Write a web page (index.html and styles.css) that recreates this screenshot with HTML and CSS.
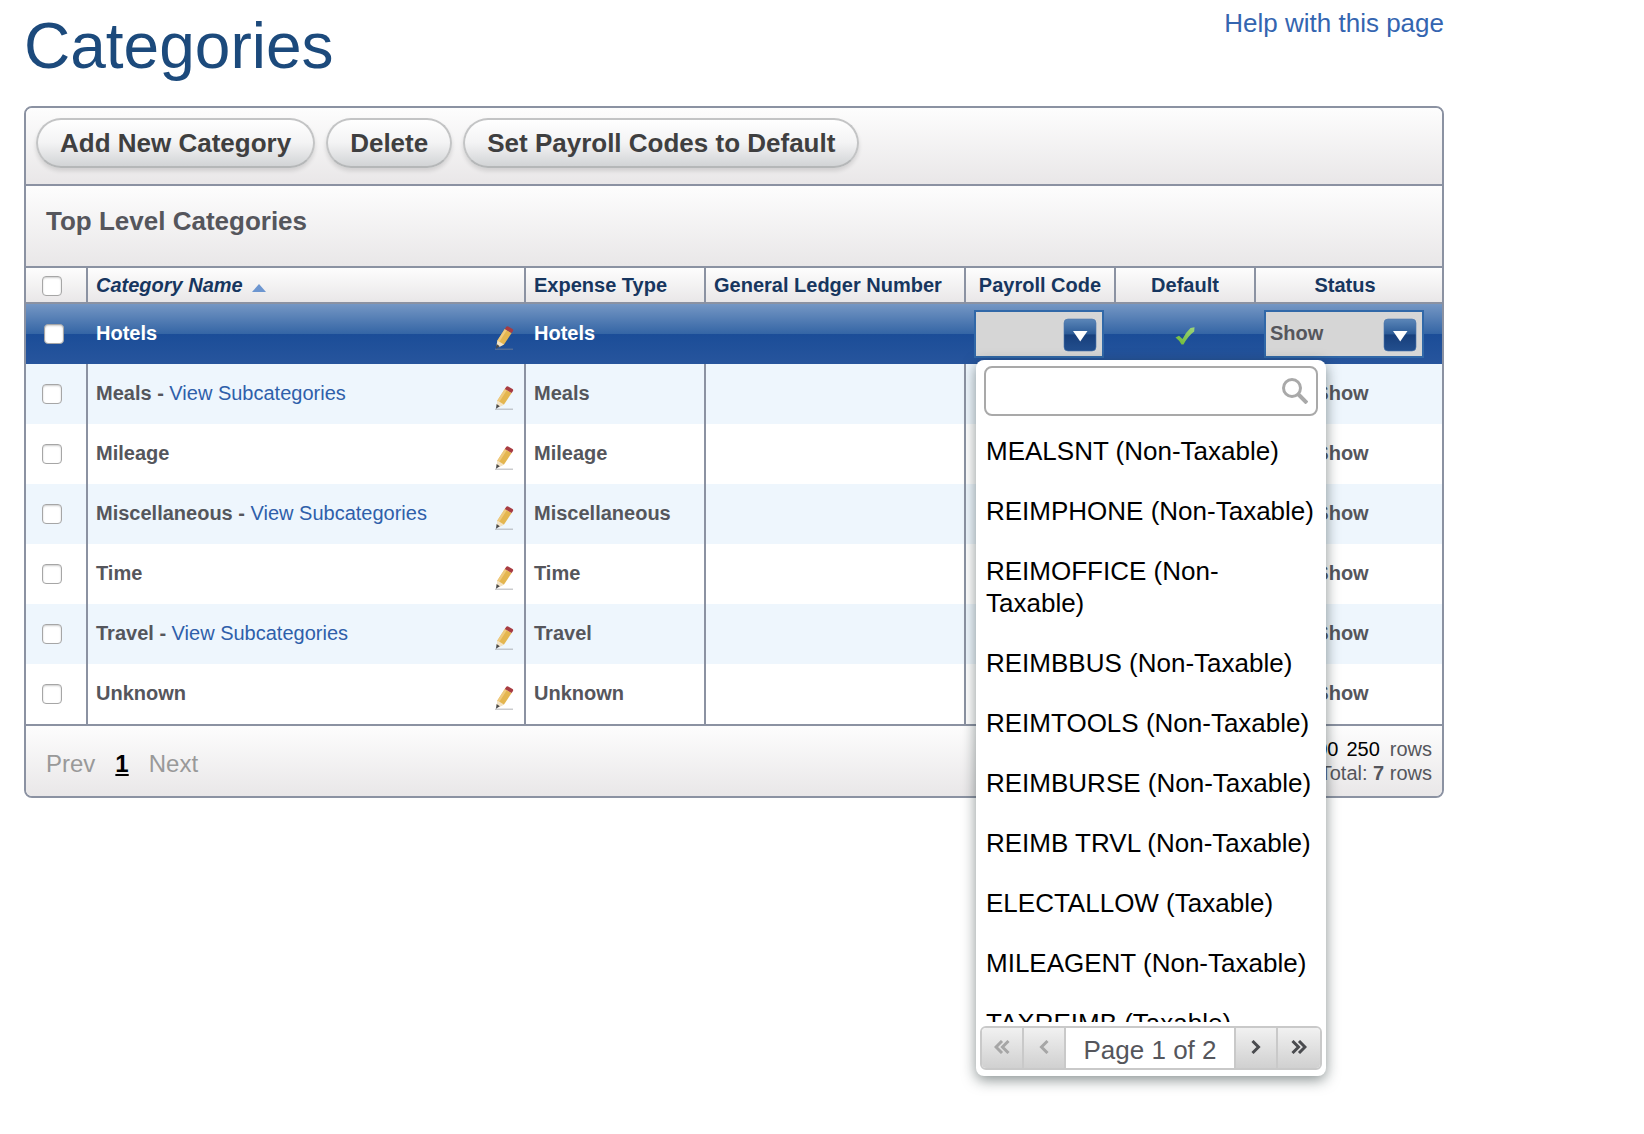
FILE: index.html
```html
<!DOCTYPE html>
<html lang="en">
<head>
<meta charset="utf-8">
<meta name="viewport" content="width=device-width, initial-scale=1">
<title>Categories</title>
<link rel="stylesheet" href="styles.css">
</head>
<body>
<svg class="sprite" aria-hidden="true">
  <defs>
    <linearGradient id="arrow-fill" x1="0" y1="0" x2="0" y2="1">
      <stop offset="0" stop-color="#5b86b8"/>
      <stop offset=".46" stop-color="#2d5c98"/>
      <stop offset=".5" stop-color="#173f7c"/>
      <stop offset="1" stop-color="#234f8e"/>
    </linearGradient>
    <linearGradient id="check-fill" x1="0" y1="1" x2="1" y2="0">
      <stop offset="0" stop-color="#6cb832"/>
      <stop offset="1" stop-color="#9ed67c"/>
    </linearGradient>
  </defs>
  <symbol id="pencil" viewBox="0 0 20 24">
    <path d="M1 22.500h18v1.500H1Z" fill="#8c8f94" opacity=".45"/>
    <path d="M3.400 14.500 10.800 3 17.600 7 10 18.600 4.500 20.800Z" fill="#e4b650"/>
    <path d="M3.400 14.500 10.800 3 12.800 4.200 5.400 15.800Z" fill="#efca7e"/>
    <path d="M3.400 14.500 10 18.600 5 21.200 2.500 19.500Z" fill="#f3e3c4"/>
    <path d="M2.600 18 5.800 20.300 2 22.800Z" fill="#4a4a4a"/>
    <path d="M10.800 3 12.300.8Q13 0 14.200.4L18.600 3Q19.500 3.800 19 4.900L17.600 7Z" fill="#a83c42"/>
  </symbol>
  <symbol id="arrow" viewBox="0 0 34 34">
    <rect x="1" y="1" width="32" height="32" rx="4" fill="url(#arrow-fill)" stroke="#4a76ad" stroke-opacity=".6"/>
    <path d="M10 13h14.500L17.200 23.500Z" fill="#fff"/>
  </symbol>
</svg>

<main class="page">
  <header class="page-head">
    <h1 class="page-title">Categories</h1>
    <a class="help-link" href="#help">Help with this page</a>
  </header>

  <section class="panel">
    <div class="toolbar">
      <button class="pill" type="button">Add New Category</button>
      <button class="pill" type="button">Delete</button>
      <button class="pill" type="button">Set Payroll Codes to Default</button>
    </div>
    <h2 class="panel-title">Top Level Categories</h2>

    <table class="grid">
      <colgroup>
        <col class="col-check"><col><col class="col-type"><col class="col-ledger">
        <col class="col-payroll"><col class="col-default"><col class="col-status">
      </colgroup>
      <thead>
        <tr>
          <th class="check-cell"><input class="tick" type="checkbox" aria-label="Select all categories"></th>
          <th class="sorted">Category Name<span class="sort-up"></span></th>
          <th>Expense Type</th>
          <th>General Ledger Number</th>
          <th class="center">Payroll Code</th>
          <th class="center">Default</th>
          <th class="status-cell">Status</th>
        </tr>
      </thead>
      <tbody>
        <tr class="active">
          <td class="check-cell"><input class="tick" type="checkbox" aria-label="Select Hotels"></td>
          <td><div class="name"><span>Hotels</span><button class="edit" type="button" aria-label="Edit Hotels"><svg><use href="#pencil"/></svg></button></div></td>
          <td>Hotels</td>
          <td></td>
          <td class="select-cell">
            <div class="picker">
              <select class="drop" aria-label="Payroll code"><option></option></select>
              <svg class="drop-arrow" aria-hidden="true"><use href="#arrow"/></svg>
              <div class="popup">
                <div class="search">
                  <input class="search-box" type="text" aria-label="Search payroll codes">
                  <svg class="search-icon" viewBox="0 0 26 26" aria-hidden="true"><circle cx="10" cy="10" r="8.500" fill="none" stroke="#a9a9a9" stroke-width="3"/><path d="M16 16 25 25" stroke="#a9a9a9" stroke-width="4"/></svg>
                </div>
                <ul class="options">
                  <li>MEALSNT (Non-Taxable)</li>
                  <li>REIMPHONE (Non-Taxable)</li>
                  <li>REIMOFFICE (Non-Taxable)</li>
                  <li>REIMBBUS (Non-Taxable)</li>
                  <li>REIMTOOLS (Non-Taxable)</li>
                  <li>REIMBURSE (Non-Taxable)</li>
                  <li>REIMB TRVL (Non-Taxable)</li>
                  <li>ELECTALLOW (Taxable)</li>
                  <li>MILEAGENT (Non-Taxable)</li>
                  <li>TAXREIMB (Taxable)</li>
                </ul>
                <div class="pager">
                  <button class="pager-btn off" type="button" aria-label="First page"><svg viewBox="0 0 16 14"><path d="M8 1 2 7l6 6M14.500 1l-6 6 6 6"/></svg></button>
                  <button class="pager-btn off" type="button" aria-label="Previous page"><svg viewBox="0 0 16 14"><path d="M11.500 1l-6 6 6 6"/></svg></button>
                  <span class="pager-text">Page 1 of 2</span>
                  <button class="pager-btn" type="button" aria-label="Next page"><svg viewBox="0 0 16 14"><path d="M4.500 1l6 6-6 6"/></svg></button>
                  <button class="pager-btn" type="button" aria-label="Last page"><svg viewBox="0 0 16 14"><path d="M1.500 1l6 6-6 6M8 1l6 6-6 6"/></svg></button>
                </div>
              </div>
            </div>
          </td>
          <td class="center"><svg class="check" viewBox="0 0 20 18" role="img" aria-label="Yes"><path d="M.5 10.500 4 8.800 7.500 12Q11 5 15.500 1L19.500 .3 19.200 4.500Q13 9 8.500 17.500L6.500 17.500Q4 13 .5 10.500Z" fill="url(#check-fill)"/></svg></td>
          <td class="select-cell">
            <div class="picker">
              <select class="drop" aria-label="Status"><option>Show</option><option>Hide</option></select>
              <svg class="drop-arrow" aria-hidden="true"><use href="#arrow"/></svg>
            </div>
          </td>
        </tr>
        <tr>
          <td class="check-cell"><input class="tick" type="checkbox" aria-label="Select Meals"></td>
          <td><div class="name"><span>Meals - <a href="#meals">View Subcategories</a></span><button class="edit" type="button" aria-label="Edit Meals"><svg><use href="#pencil"/></svg></button></div></td>
          <td>Meals</td><td></td><td></td><td></td><td class="status-cell">Show</td>
        </tr>
        <tr>
          <td class="check-cell"><input class="tick" type="checkbox" aria-label="Select Mileage"></td>
          <td><div class="name"><span>Mileage</span><button class="edit" type="button" aria-label="Edit Mileage"><svg><use href="#pencil"/></svg></button></div></td>
          <td>Mileage</td><td></td><td></td><td></td><td class="status-cell">Show</td>
        </tr>
        <tr>
          <td class="check-cell"><input class="tick" type="checkbox" aria-label="Select Miscellaneous"></td>
          <td><div class="name"><span>Miscellaneous - <a href="#miscellaneous">View Subcategories</a></span><button class="edit" type="button" aria-label="Edit Miscellaneous"><svg><use href="#pencil"/></svg></button></div></td>
          <td>Miscellaneous</td><td></td><td></td><td></td><td class="status-cell">Show</td>
        </tr>
        <tr>
          <td class="check-cell"><input class="tick" type="checkbox" aria-label="Select Time"></td>
          <td><div class="name"><span>Time</span><button class="edit" type="button" aria-label="Edit Time"><svg><use href="#pencil"/></svg></button></div></td>
          <td>Time</td><td></td><td></td><td></td><td class="status-cell">Show</td>
        </tr>
        <tr>
          <td class="check-cell"><input class="tick" type="checkbox" aria-label="Select Travel"></td>
          <td><div class="name"><span>Travel - <a href="#travel">View Subcategories</a></span><button class="edit" type="button" aria-label="Edit Travel"><svg><use href="#pencil"/></svg></button></div></td>
          <td>Travel</td><td></td><td></td><td></td><td class="status-cell">Show</td>
        </tr>
        <tr>
          <td class="check-cell"><input class="tick" type="checkbox" aria-label="Select Unknown"></td>
          <td><div class="name"><span>Unknown</span><button class="edit" type="button" aria-label="Edit Unknown"><svg><use href="#pencil"/></svg></button></div></td>
          <td>Unknown</td><td></td><td></td><td></td><td class="status-cell">Show</td>
        </tr>
      </tbody>
    </table>

    <footer class="panel-foot">
      <nav class="pages" aria-label="Pages">
        <span>Prev</span>
        <a class="current" href="#page-1">1</a>
        <span>Next</span>
      </nav>
      <div class="counts">
        <div class="sizes"><a href="#rows-100">100</a><a href="#rows-250">250</a><span class="unit">rows</span></div>
        <div>Total: <b>7</b> rows</div>
      </div>
    </footer>
  </section>
</main>
</body>
</html>
```
FILE: styles.css
```css
* {
  box-sizing: border-box;
}

body {
  margin: 0;
  background: #fff;
  color: #55565c;
  font: 20px/24px "Liberation Sans", Arial, Helvetica, sans-serif;
}

a {
  color: #2f5faa;
  text-decoration: none;
}

button,
input,
select {
  margin: 0;
  font: inherit;
  color: inherit;
}

.sprite {
  position: absolute;
  width: 0;
  height: 0;
}

.page {
  min-height: 100vh;
  padding: 0 200px 60px 24px;
}

.page-head {
  display: flex;
  justify-content: space-between;
  align-items: flex-start;
  padding: 8px 0 24px;
}

.page-title {
  margin: 2px 0 0;
  color: #1c4a7c;
  font-size: 64px;
  font-weight: 400;
  line-height: 72px;
}

.help-link {
  font-size: 26px;
  line-height: 30px;
  color: #3465b0;
}

/* Panel */

.panel {
  border: 2px solid #8b92a2;
  border-radius: 8px;
}

.toolbar,
.panel-title,
.grid th,
.panel-foot {
  background: linear-gradient(#fdfdfd, #e9e7e8);
}

.toolbar {
  display: flex;
  gap: 11px;
  padding: 10px 10px 16px;
  border-bottom: 2px solid #8b92a2;
  border-radius: 6px 6px 0 0;
}

.pill {
  padding: 8px 22px;
  border: 2px solid #c3c4c5;
  border-bottom-color: #b5b7b8;
  border-radius: 25px;
  background: linear-gradient(#fff, #f3f3f4 50%, #d2d4d6);
  box-shadow: 0 3px 4px rgba(0, 0, 0, .12);
  color: #3f3f40;
  font-size: 26px;
  font-weight: 700;
  line-height: 30px;
}

.panel-title {
  margin: 0;
  padding: 20px 20px 30px;
  border-bottom: 2px solid #8b92a2;
  font-size: 26px;
  line-height: 30px;
}

/* Table */

.grid {
  width: 100%;
  table-layout: fixed;
  border-spacing: 0;
  font-weight: 700;
}

.col-check { width: 62px; }
.col-type { width: 180px; }
.col-ledger { width: 260px; }
.col-payroll { width: 150px; }
.col-default { width: 140px; }
.col-status { width: 186px; }

.grid th,
.grid td {
  border-right: 2px solid #8b92a2;
  text-align: left;
  vertical-align: top;
}

.grid th {
  padding: 5px 8px;
  border-bottom: 2px solid #8b92a2;
  color: #17365f;
  white-space: nowrap;
}

.grid td {
  height: 60px;
  padding: 17px 8px 14px;
}

.grid th:last-child,
.grid td:last-child {
  border-right: 0;
}

.grid .sorted {
  font-style: italic;
}

.sort-up {
  display: inline-block;
  margin-left: 9px;
  border: 7px solid transparent;
  border-top: 0;
  border-bottom: 8px solid #6d96d0;
}

.grid .center {
  text-align: center;
}

.grid .status-cell {
  padding-right: 16px;
  text-align: center;
}

.grid td.status-cell {
  padding-right: 22px;
}

.grid tbody tr:nth-child(even) {
  background: #eef6fd;
}

.grid .active {
  background: linear-gradient(#7597c4, #3465a5 50%, #1b4d98 50%, #27559d);
  color: #fff;
}

.grid .active td {
  border-right-color: transparent;
}

.grid .check-cell {
  padding: 20px 0 0 16px;
}

.grid th.check-cell {
  padding-top: 8px;
}

.grid .active .check-cell {
  padding-left: 18px;
}

.tick {
  display: block;
  width: 20px;
  height: 20px;
  appearance: none;
  border: 1px solid #a6a6a6;
  border-radius: 4px;
  background: #fff;
  box-shadow: inset 0 1px 2px rgba(0, 0, 0, .2);
}

.tick:checked {
  background: #2f5faa;
}

.name {
  display: flex;
  justify-content: space-between;
}

.name a {
  font-weight: 400;
}

.edit {
  width: 20px;
  height: 24px;
  margin: 5px 2px 0 0;
  padding: 0;
  border: 0;
  background: none;
}

.edit svg {
  display: block;
  width: 20px;
  height: 24px;
}

.check {
  width: 20px;
  height: 18px;
  margin-top: 6px;
}

/* Drop-downs in the row being edited */

.grid .select-cell {
  padding: 6px 0 0 8px;
}

.picker {
  position: relative;
  margin-right: 10px;
}

td:last-child .picker {
  margin-right: 18px;
}

.drop {
  display: block;
  width: 100%;
  height: 48px;
  padding: 0 48px 2px 4px;
  appearance: none;
  border: 2px solid #3168a8;
  border-radius: 0;
  background: #d6d6d6;
  color: #55565c;
}

.drop-arrow {
  position: absolute;
  top: 8px;
  right: 7px;
  width: 34px;
  height: 34px;
  pointer-events: none;
}

.popup {
  position: absolute;
  z-index: 1;
  top: 50px;
  left: 2px;
  width: 350px;
  padding: 6px 4px;
  border-radius: 8px;
  background: #fff;
  box-shadow: 0 4px 14px rgba(20, 35, 35, .5);
  color: #000;
  font-size: 26px;
  font-weight: 400;
  line-height: 32px;
}

.search {
  position: relative;
  margin: 0 4px 5px;
}

.search-box {
  display: block;
  width: 100%;
  height: 50px;
  padding: 0 44px 0 8px;
  border: 2px solid #a9a9a9;
  border-radius: 8px;
  background: #fff;
}

.search-icon {
  position: absolute;
  top: 12px;
  right: 10px;
  width: 26px;
  height: 26px;
}

.options {
  height: 601px;
  margin: 0 0 4px;
  padding: 0 6px;
  overflow-y: auto;
  scrollbar-width: none;
  list-style: none;
}

.options li {
  padding: 14px 0;
}

.pager {
  display: flex;
  height: 44px;
  overflow: hidden;
  border: 2px solid #c9c9c9;
  border-radius: 6px;
  color: #55565c;
}

.pager-btn {
  display: flex;
  justify-content: center;
  width: 42px;
  padding: 12px 0 0;
  border: 0;
  border-right: 2px solid #c9c9c9;
  background: linear-gradient(#f1f1f1, #d0d0d0);
}

.pager-btn svg {
  width: 16px;
  height: 14px;
  fill: none;
  stroke: #4a4b4f;
  stroke-width: 3;
}

.pager-btn.off svg {
  stroke: #a6a6a6;
}

.pager-btn:last-child {
  border-right: 0;
}

.pager-text {
  flex: 1;
  border-right: 2px solid #c9c9c9;
  line-height: 44px;
  text-align: center;
}

/* Footer */

.panel-foot {
  display: flex;
  justify-content: space-between;
  padding: 11px 10px 11px 20px;
  border-top: 2px solid #8b92a2;
  border-radius: 0 0 6px 6px;
}

.pages {
  display: flex;
  gap: 20px;
  padding-top: 13px;
  color: #999;
  font-size: 24px;
  line-height: 28px;
}

.pages .current {
  color: #000;
  font-weight: 700;
  text-decoration: underline;
}

.counts {
  text-align: right;
}

.sizes {
  display: flex;
  justify-content: flex-end;
  gap: 8px;
}

.sizes a {
  color: #000;
}

.unit {
  padding-left: 2px;
}
```
